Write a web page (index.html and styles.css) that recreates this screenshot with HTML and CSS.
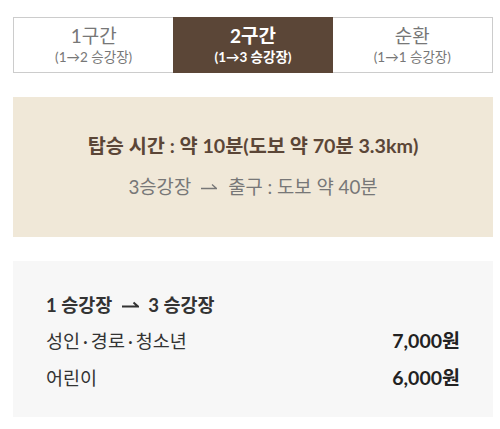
FILE: index.html
```html
<!DOCTYPE html>
<html lang="ko">
<head>
<meta charset="utf-8">
<link rel="stylesheet" href="styles.css">
</head>
<body>
<div class="wrap">
  <div class="tabs">
    <div class="tab"><span class="tab-title">1구간</span><span class="tab-sub">(1→2 승강장)</span></div>
    <div class="tab active"><span class="tab-title">2구간</span><span class="tab-sub">(1→3 승강장)</span></div>
    <div class="tab"><span class="tab-title">순환</span><span class="tab-sub">(1→1 승강장)</span></div>
  </div>
  <div class="info">
    <p class="info-main">탑승 시간 : 약 10분(도보 약 70분 3.3km)</p>
    <p class="info-sub">3승강장<svg class="arr" width="16" height="8" viewBox="0 0 16 8"><path d="M0 6.5H15.5L11 2.5" fill="none" stroke="currentColor" stroke-width="1.3"/></svg>출구 : 도보 약 40분</p>
  </div>
  <div class="fare">
    <p class="fare-head">1 승강장<svg class="arr arr-bold" width="17" height="8" viewBox="0 0 17 8"><path d="M0 6.5H16L11.5 2.5" fill="none" stroke="currentColor" stroke-width="2"/></svg>3 승강장</p>
    <div class="fare-row"><span>성인<span class="dot">·</span>경로<span class="dot">·</span>청소년</span><span class="price">7,000원</span></div>
    <div class="fare-row"><span>어린이</span><span class="price">6,000원</span></div>
  </div>
</div>
</body>
</html>
```
FILE: styles.css
```css
* { box-sizing: border-box; }
body {
  margin: 0;
  background: #fff;
  font-family: Lato, "Noto Sans CJK KR", sans-serif;
}
.wrap {
  width: 480px;
  margin: 17px 0 0 13px;
}
.tabs {
  display: flex;
  border: 1px solid #cccccc;
  height: 56px;
}
.tab {
  flex: 1;
  display: flex;
  flex-direction: column;
  align-items: center;
  justify-content: center;
  color: #777;
  background: #fff;
  padding-top: 1px;
}
.tab.active {
  background: #5b4637;
  color: #fff;
  font-weight: bold;
  margin: -1px 0;
}
.tab-title {
  font-size: 19px;
  line-height: 24px;
}
.tab-sub {
  font-size: 13.5px;
  line-height: 20px;
  margin-top: -1px;
}
.info {
  margin-top: 24px;
  height: 140px;
  background: #f0e8d8;
  display: flex;
  flex-direction: column;
  align-items: center;
  justify-content: center;
  gap: 15px;
  padding-bottom: 2px;
}
.info p { margin: 0; }
.info-main {
  font-size: 19.7px;
  font-weight: bold;
  color: #5b4637;
  line-height: 26px;
}
.info-sub {
  font-size: 18.8px;
  color: #777;
  line-height: 26px;
}
.arr {
  margin: 0 11px 0 10px;
  vertical-align: 4px;
}
.fare {
  margin-top: 24px;
  height: 156px;
  background: #f7f7f7;
  padding: 26px 33px 0 33px;
  color: #333;
  font-size: 18.5px;
}
.fare-head {
  margin: 0;
  font-weight: bold;
  line-height: 36px;
}
.fare-head .arr { margin: 0 9px 0 10px; }
.fare-row {
  display: flex;
  justify-content: space-between;
  align-items: baseline;
  line-height: 35.5px;
}
.dot {
  margin: 0 3px;
}
.price {
  font-weight: bold;
  color: #222;
  font-size: 19.5px;
}
```
